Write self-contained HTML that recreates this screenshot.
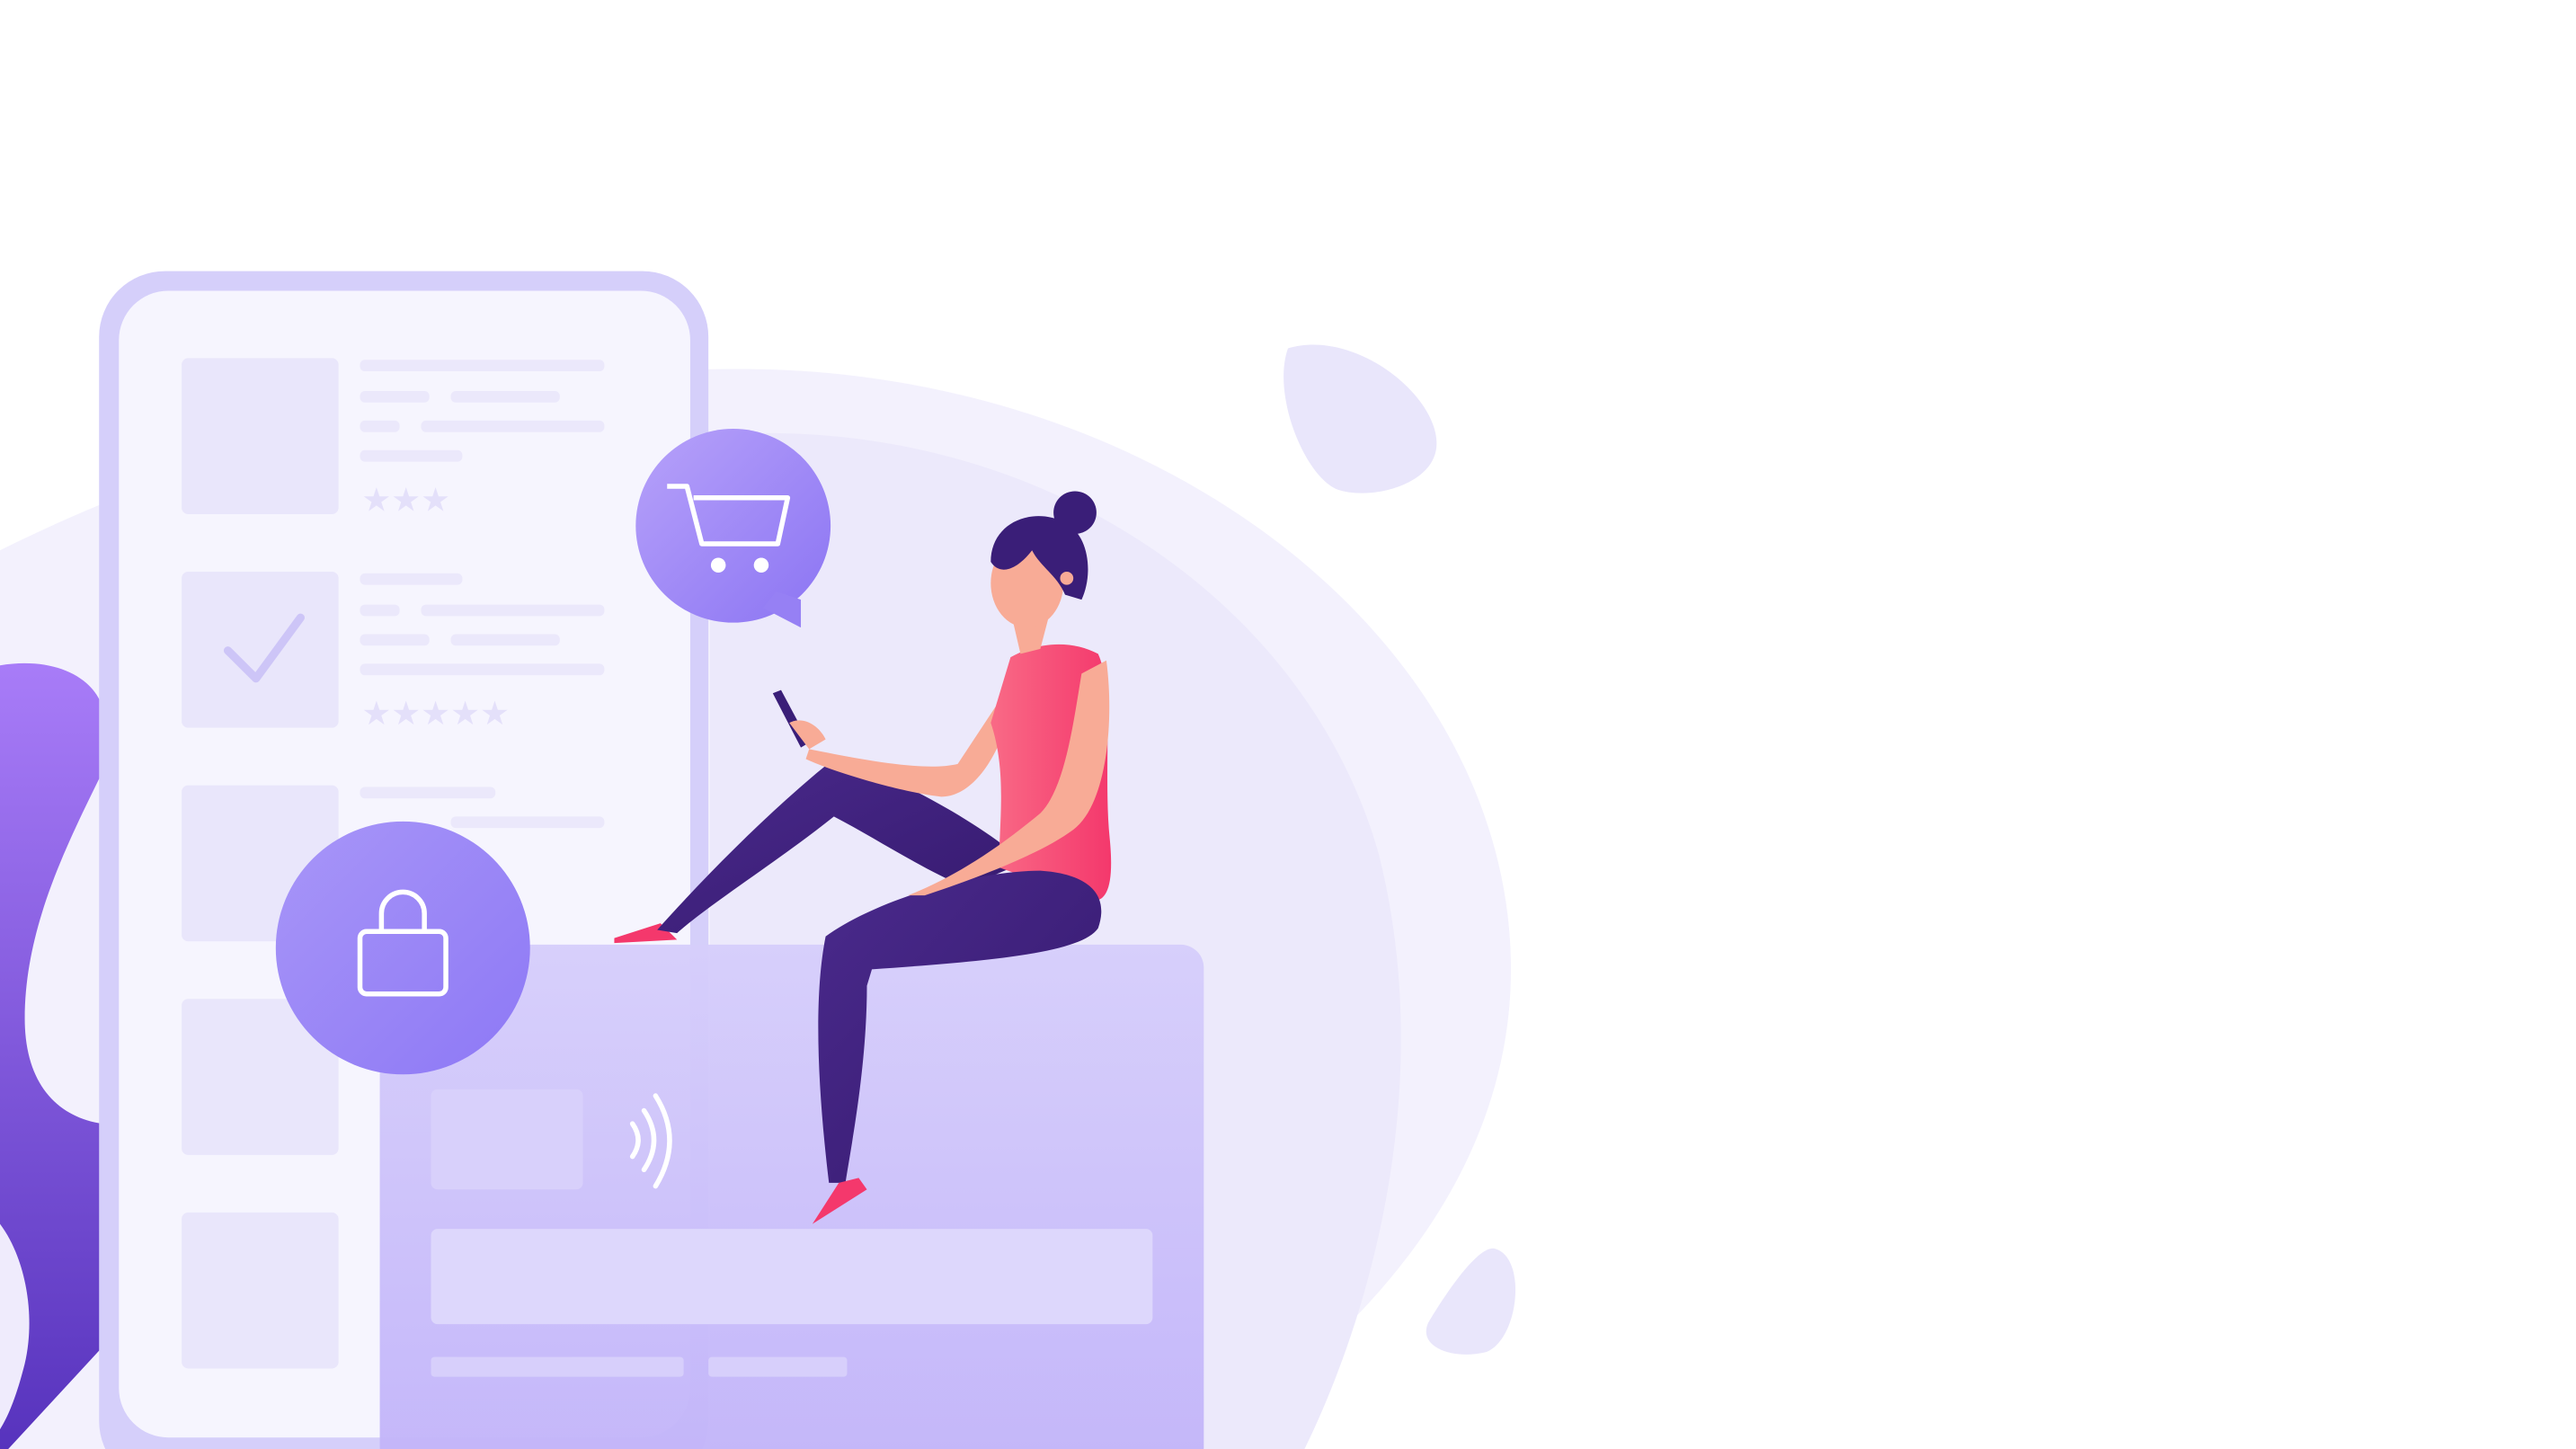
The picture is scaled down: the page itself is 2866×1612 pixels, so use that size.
<!DOCTYPE html>
<html><head><meta charset="utf-8"><style>html,body{margin:0;padding:0;background:#fff;overflow:hidden}svg{display:block}</style></head>
<body>
<svg width="2866" height="1612" viewBox="0 0 1560 882" preserveAspectRatio="none" xmlns="http://www.w3.org/2000/svg">
<defs>
<linearGradient id="lp" x1="0" y1="0" x2="0" y2="1"><stop offset="0" stop-color="#a87cf8"/><stop offset="1" stop-color="#5733bd"/></linearGradient>
<linearGradient id="cart" x1="0" y1="0" x2="1" y2="1"><stop offset="0" stop-color="#b7a2fa"/><stop offset="1" stop-color="#8b74f3"/></linearGradient>
<linearGradient id="lock" x1="0" y1="0" x2="1" y2="1"><stop offset="0" stop-color="#a896f8"/><stop offset="1" stop-color="#8d78f5"/></linearGradient>
<linearGradient id="card" x1="0" y1="0" x2="0" y2="1"><stop offset="0" stop-color="#d6cefb"/><stop offset="1" stop-color="#c2b4f9"/></linearGradient>
<linearGradient id="top" x1="0" y1="0" x2="1" y2="0"><stop offset="0" stop-color="#f96a86"/><stop offset="1" stop-color="#f4386c"/></linearGradient>
<linearGradient id="leg" x1="0" y1="0" x2="1" y2="1"><stop offset="0" stop-color="#4a2a8c"/><stop offset="1" stop-color="#35196e"/></linearGradient>
</defs>
<rect width="1560" height="882" fill="#fff"/>
<path d="M0 335 C150 260 330 220 470 225 C720 235 915 400 915 590 C915 720 820 820 720 882 L0 882 Z" fill="#f3f1fd"/>
<path d="M430 265 C620 250 790 360 835 520 C870 660 830 800 790 882 L430 882 Z" fill="#ece9fb"/>
<path d="M780 212 C820 200 870 240 870 270 C870 295 830 305 810 298 C790 290 770 240 780 212 Z" fill="#e9e6fb"/>
<path d="M905 760 C925 765 920 815 900 823 C880 828 858 820 865 805 C875 788 895 758 905 760 Z" fill="#e9e6fb"/>
<path d="M0 405 C30 400 55 410 62 430 L62 470 C40 515 15 565 15 620 C15 660 35 680 62 684 L62 820 L5 882 L0 882 Z" fill="url(#lp)"/>
<path d="M0 745 C15 765 22 800 15 830 C10 850 5 862 0 870 Z" fill="#efebfc"/>
<rect x="60" y="165" width="369" height="740" rx="40" fill="#d5cffa"/>
<rect x="72" y="177" width="346" height="698" rx="30" fill="#f6f5fe"/>
<g fill="#e9e6fb">
<rect x="110" y="218" width="95" height="95" rx="4"/><rect x="110" y="348" width="95" height="95" rx="4"/><rect x="110" y="478" width="95" height="95" rx="4"/><rect x="110" y="608" width="95" height="95" rx="4"/><rect x="110" y="738" width="95" height="95" rx="4"/>
</g>
<g fill="#ebe8fb">
<rect x="218" y="219" width="148" height="7" rx="3"/><rect x="218" y="238" width="42" height="7" rx="3"/><rect x="273" y="238" width="66" height="7" rx="3"/><rect x="218" y="256" width="24" height="7" rx="3"/><rect x="255" y="256" width="111" height="7" rx="3"/><rect x="218" y="274" width="62" height="7" rx="3"/>
<rect x="218" y="349" width="62" height="7" rx="3"/><rect x="218" y="368" width="24" height="7" rx="3"/><rect x="255" y="368" width="111" height="7" rx="3"/><rect x="218" y="386" width="42" height="7" rx="3"/><rect x="273" y="386" width="66" height="7" rx="3"/><rect x="218" y="404" width="148" height="7" rx="3"/>
<rect x="218" y="479" width="82" height="7" rx="3"/><rect x="273" y="497" width="93" height="7" rx="3"/>
</g>
<g fill="#e4e0fa" font-family="DejaVu Sans" font-size="20"><text x="219" y="311">★★★</text><text x="219" y="441">★★★★★</text></g>
<path d="M138 396 L155 413 L182 376" stroke="#cdc5f7" stroke-width="5" fill="none" stroke-linecap="round" stroke-linejoin="round"/>
<circle cx="444" cy="320" r="59" fill="url(#cart)"/>
<path d="M470 360 L485 365 L485 382 L462 370 Z" fill="#9680f4"/>
<g stroke="#fff" stroke-width="3" fill="none" stroke-linejoin="round"><path d="M404 296 L416 296 L425 331 L471 331 L477 303 L420 303"/></g>
<circle cx="435" cy="344" r="4.5" fill="#fff"/><circle cx="461" cy="344" r="4.5" fill="#fff"/>
<rect x="230" y="575" width="499" height="320" rx="14" fill="url(#card)" opacity="0.96"/>
<rect x="261" y="663" width="92" height="61" rx="4" fill="#d8d0fb"/>
<rect x="261" y="748" width="437" height="58" rx="4" fill="#ddd7fc"/>
<rect x="261" y="826" width="153" height="12" rx="2" fill="#d7cffb"/><rect x="429" y="826" width="84" height="12" rx="2" fill="#d7cffb"/>
<g stroke="#fff" stroke-width="3" fill="none" stroke-linecap="round"><path d="M383 684 Q390 694 383 704"/><path d="M390 676 Q402 694 390 712"/><path d="M397 667 Q414 694 397 722"/></g>
<circle cx="244" cy="577" r="77" fill="url(#lock)"/>
<rect x="218" y="567" width="52" height="38" rx="4" fill="none" stroke="#fff" stroke-width="3"/>
<path d="M231 567 L231 556 A13 13 0 0 1 257 556 L257 567" fill="none" stroke="#fff" stroke-width="3"/>
<path d="M372 571 L400 562 L410 572 L372 574 Z" fill="#f4386c"/>
<path d="M398 566 C430 530 470 490 505 462 C540 470 600 505 620 525 L585 540 C560 530 530 510 505 497 C470 525 430 550 410 568 Z" fill="url(#leg)"/>
<path d="M490 456 C520 462 560 470 580 465 L603 430 L610 440 C600 470 585 485 570 485 C545 482 505 470 488 462 Z" fill="#f8ab96"/>
<path d="M468 422 L473 420 L490 452 L485 455 Z" fill="#3a1e78"/>
<path d="M478 440 C485 436 495 440 500 450 L490 456 Z" fill="#f8ab96"/>
<path d="M612 400 C630 390 650 390 665 398 C675 420 668 470 672 510 C675 540 670 550 660 548 L605 528 C605 500 610 470 600 440 Z" fill="url(#top)"/>
<path d="M500 570 C530 548 590 530 630 530 C660 532 672 545 665 565 C655 580 600 585 528 590 L525 600 C525 650 515 700 512 720 L502 720 C496 670 492 610 500 570 Z" fill="url(#leg)"/>
<path d="M492 745 L508 720 L520 717 L525 724 Z" fill="#f4386c"/>
<path d="M550 545 C575 535 600 520 630 495 C645 480 650 440 655 410 L670 402 C675 440 670 490 650 505 C630 520 590 535 560 545 Z" fill="#f8ab96"/>
<path d="M612 372 L636 372 L630 395 L618 398 Z" fill="#f8ab96"/>
<ellipse cx="622" cy="355" rx="22" ry="27" fill="#f8ab96"/>
<path d="M600 342 C600 318 625 308 645 318 C660 326 662 350 655 365 L645 362 C640 350 630 345 625 335 C615 348 605 350 600 342 Z" fill="#3a1e78"/>
<circle cx="651" cy="312" r="13" fill="#3a1e78"/>
<circle cx="646" cy="352" r="4" fill="#f8ab96"/>
</svg>
</body></html>
